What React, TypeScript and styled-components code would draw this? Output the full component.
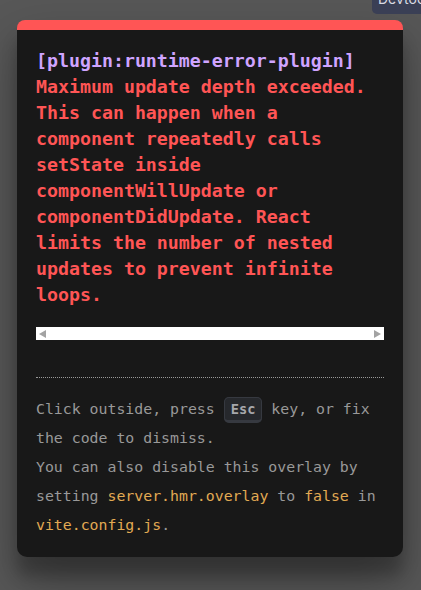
import { FC } from 'react';
import styled, { createGlobalStyle } from 'styled-components';

const GlobalStyle = createGlobalStyle`
  html,
  body {
    margin: 0;
    padding: 0;
    height: 100%;
  }

  body {
    background-color: #575757;
    overflow: hidden;
  }
`;

const mono = `'DejaVu Sans Mono', 'Liberation Mono', monospace`;

const message =
  'Maximum update depth exceeded. This can happen when a component repeatedly calls setState inside componentWillUpdate or componentDidUpdate. React limits the number of nested updates to prevent infinite loops.';

const App: FC = () => {
  return (
    <>
      <GlobalStyle />
      <Backdrop>
        <DevtoolsBadge>Devtools</DevtoolsBadge>
        <Window>
          <Message>
            <Plugin>[plugin:runtime-error-plugin] </Plugin>
            {message}
          </Message>
          <Scrollbar>
            <Arrow direction="left" />
            <Arrow direction="right" />
          </Scrollbar>
          <Tip>
            Click outside, press <Kbd>Esc</Kbd> key, or fix the code to dismiss.
            <br />
            You can also disable this overlay by setting{' '}
            <Code>server.hmr.overlay</Code> to <Code>false</Code> in{' '}
            <Code>vite.config.js</Code>.
          </Tip>
        </Window>
      </Backdrop>
    </>
  );
};

const Backdrop = styled.div`
  min-height: 100vh;
  padding: 20px 0 0 17px;
  box-sizing: border-box;
`;

const DevtoolsBadge = styled.div`
  position: fixed;
  top: -15px;
  left: 372px;
  height: 29px;
  box-sizing: border-box;
  padding: 6px 8px 4px 6px;
  background-color: #3a3f55;
  color: #d8dae2;
  font-family: Inter, 'Noto Sans', sans-serif;
  font-size: 14px;
  line-height: 16px;
  border-radius: 0 0 0 5px;
  white-space: nowrap;
`;

const Window = styled.div`
  width: 386px;
  box-sizing: border-box;
  padding: 18px 19px 17px;
  background-color: #181818;
  border-top: 10px solid #ff5555;
  border-radius: 8px 8px 10px 10px;
  box-shadow: 0 24px 48px rgba(0, 0, 0, 0.3), 0 19px 15px rgba(0, 0, 0, 0.22);
  overflow: hidden;
`;

const Message = styled.pre`
  margin: 0 0 19px;
  font-family: ${mono};
  font-size: 18.25px;
  font-weight: 700;
  line-height: 26px;
  color: #ff5555;
  white-space: pre-wrap;
`;

const Plugin = styled.span`
  color: #cfa4ff;
`;

const Scrollbar = styled.div`
  height: 13px;
  margin-bottom: 37px;
  padding: 0 3px;
  background-color: #ffffff;
  display: flex;
  align-items: center;
  justify-content: space-between;
`;

const Arrow = styled.span<{ direction: 'left' | 'right' }>`
  width: 0;
  height: 0;
  border-top: 4px solid transparent;
  border-bottom: 4px solid transparent;
  ${({ direction }) =>
    direction === 'left'
      ? 'border-right: 7px solid #a3a3a3;'
      : 'border-left: 7px solid #a3a3a3;'}
`;

const Tip = styled.div`
  border-top: 1px dotted #999999;
  padding-top: 17px;
  font-family: ${mono};
  font-size: 14.85px;
  line-height: 29px;
  color: #999999;
`;

const Kbd = styled.kbd`
  font-family: ${mono};
  font-size: 13.7px;
  font-weight: 700;
  line-height: 1.5;
  padding: 3px 6px;
  background-color: rgb(38, 40, 44);
  color: rgb(166, 167, 171);
  border-style: solid;
  border-color: rgb(54, 57, 64);
  border-width: 1.25px 1.25px 3.75px;
  border-radius: 5px;
`;

const Code = styled.code`
  font-family: ${mono};
  font-size: 14.85px;
  color: #e2aa53;
`;

export default App;
